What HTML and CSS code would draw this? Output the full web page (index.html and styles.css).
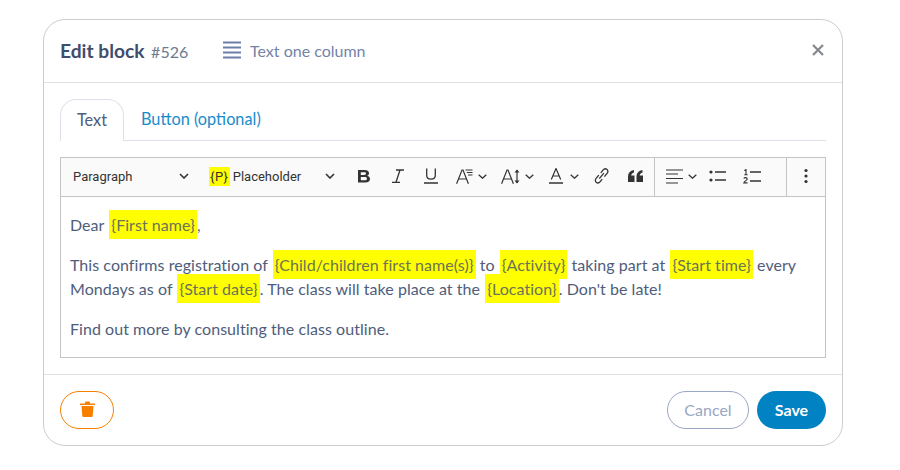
FILE: index.html
```html
<!DOCTYPE html>
<html lang="en">
<head>
<meta charset="utf-8">
<title>Edit block</title>
<link rel="stylesheet" href="styles.css">
</head>
<body>
<div class="card">
  <header class="head">
    <h1 class="title">Edit block <span class="num">#526</span></h1>
    <div class="kind">
      <svg class="kind-icon" width="18" height="18" viewBox="0 0 18 18"><path d="M0 1.500h18M0 6.500h18M0 11.500h18M0 16.500h18" stroke="#6d7fa8" stroke-width="2" fill="none"/></svg>
      <span>Text one column</span>
    </div>
    <svg class="close" width="12" height="12" viewBox="0 0 12 12"><path d="M1 1l10 10M11 1L1 11" stroke="#85888c" stroke-width="2.200" fill="none"/></svg>
  </header>
  <main class="body">
    <nav class="tabs">
      <span class="tab active">Text</span>
      <span class="tab link">Button (optional)</span>
    </nav>
    <section class="editor">
      <div class="toolbar">
        <div class="tgroup first">
          <span class="drop para">Paragraph<svg class="chev-lg" width="10" height="6" viewBox="0 0 10 6"><path d="M1 1l4 4 4-4" stroke="#333" stroke-width="1.600" fill="none"/></svg></span>
          <span class="drop ph"><span class="ph-p"><mark class="ph-mark">{P}</mark> Placeholder</span><svg class="chev-lg" width="10" height="6" viewBox="0 0 10 6"><path d="M1 1l4 4 4-4" stroke="#333" stroke-width="1.600" fill="none"/></svg></span>
          <svg class="ic bold" width="14" height="14" viewBox="0 0 14 14"><path d="M1 1h6.600C10.200 1 12 2.200 12 4.200c0 1.300-.8 2.200-1.900 2.600C11.700 7.200 13 8.300 13 10c0 2.200-1.800 3.500-4.600 3.500H1zM3.800 3.200v2.800h3.500c1 0 1.700-.5 1.700-1.400s-.7-1.400-1.700-1.400zM3.800 8.100v3.200h4.200c1.200 0 1.900-.6 1.900-1.600S9.200 8.100 8 8.100z" fill="#333" fill-rule="evenodd"/></svg>
          <svg class="ic ital" width="12" height="14" viewBox="0 0 12 14"><path d="M4 1h8M0 13.300h8M8 1L4 13.300" stroke="#333" stroke-width="1.300" fill="none"/></svg>
          <svg class="ic und" width="14" height="16" viewBox="0 0 14 16"><path d="M2.700 .5v6.800c0 2.700 1.700 3.900 4.300 3.900s4.300-1.200 4.300-3.900V.5M0 15h14" stroke="#333" stroke-width="1.300" fill="none"/></svg>
          <svg class="ic fam" width="17" height="15" viewBox="0 0 17 15"><path d="M.6 14.700L6 1h1L12.400 14.700M2.700 10h8M9.500 1h7M10.800 3.500h5.700M12 6h4.500" stroke="#333" stroke-width="1.200" fill="none"/></svg>
          <svg class="chev c1" width="9" height="5" viewBox="0 0 9 5"><path d="M.7.7l3.800 3.500L8.300.7" stroke="#333" stroke-width="1.300" fill="none"/></svg>
          <svg class="ic size" width="20" height="15" viewBox="0 0 20 15"><path d="M.6 14.700L6 1h1L12.400 14.700M2.700 10h8M16 1v13" stroke="#333" stroke-width="1.200" fill="none"/><path d="M13.500 3.500L16 .5l2.500 3zM13.500 11.500L16 14.500l2.500-3z" fill="#333"/></svg>
          <svg class="chev c2" width="9" height="5" viewBox="0 0 9 5"><path d="M.7.7l3.800 3.500L8.300.7" stroke="#333" stroke-width="1.300" fill="none"/></svg>
          <svg class="ic col" width="14" height="16" viewBox="0 0 14 16"><path d="M2.300 11.500L7 .5l4.700 11M3.800 8h6.400" stroke="#333" stroke-width="1.200" fill="none"/><path d="M0 15h14" stroke="#333" stroke-width="1.500"/></svg>
          <svg class="chev c3" width="9" height="5" viewBox="0 0 9 5"><path d="M.7.7l3.800 3.500L8.300.7" stroke="#333" stroke-width="1.300" fill="none"/></svg>
          <svg class="ic lnk" width="15" height="16" viewBox="0 0 15 16"><path d="M6.800 4.800l2.200-2.700c1.100-1.300 2.900-1.500 4-.6 1.100.9 1.200 2.600.1 3.900l-2.700 3.300M8.200 11.200l-2 2.500c-1.100 1.300-2.900 1.500-4 .6-1.100-.9-1.200-2.600-.1-3.900L4.800 7.100M5.300 10.600l4.600-5.500" stroke="#333" stroke-width="1.300" fill="none"/></svg>
          <svg class="ic quote" width="15" height="12" viewBox="0 0 15 12"><path d="M0 12V6.500C0 3 2 .7 6 0v2.500C4.200 3 3.400 4 3.200 5.500H6.500V12zM8.500 12V6.500C8.500 3 10.500 .7 14.500 0v2.500c-1.800.5-2.600 1.500-2.800 3H15V12z" fill="#333"/></svg>
        </div>
        <div class="tgroup second">
          <svg class="ic" width="17" height="15" viewBox="0 0 17 15"><path d="M0 1h17M0 5h12M0 9.500h17M0 14h12" stroke="#333" stroke-width="1.200" fill="none"/></svg>
          <svg class="chev c4" width="9" height="5" viewBox="0 0 9 5"><path d="M.7.7l3.800 3.500L8.300.7" stroke="#333" stroke-width="1.300" fill="none"/></svg>
          <svg class="ic bul" width="17" height="12" viewBox="0 0 17 12"><circle cx="2" cy="2" r="1.600" fill="#333"/><circle cx="2" cy="10" r="1.600" fill="#333"/><path d="M6 2h11M6 10h11" stroke="#333" stroke-width="1.300"/></svg>
          <svg class="ic numl" width="18" height="15" viewBox="0 0 18 15"><path d="M1.300 1.500L3 .7v5M1.300 5.700h3.300M.8 9.500c.5-1.200 3.400-1.200 3.400.4 0 1.400-2.600 2-3.400 4h3.800" stroke="#333" stroke-width="1.100" fill="none"/><path d="M7 3h11M7 12h11" stroke="#333" stroke-width="1.300"/></svg>
        </div>
        <div class="tgroup third">
          <svg width="4" height="16" viewBox="0 0 4 16"><circle cx="2" cy="2.500" r="1.600" fill="#333"/><circle cx="2" cy="8" r="1.600" fill="#333"/><circle cx="2" cy="13.500" r="1.600" fill="#333"/></svg>
        </div>
      </div>
      <div class="content">
        <p>Dear <mark class="hl">{First name}</mark>,</p>
        <p>This confirms registration of <mark class="hl">{Child/children first name(s)}</mark> to <mark class="hl">{Activity}</mark> taking part at <mark class="hl">{Start time}</mark> every Mondays as of <mark class="hl">{Start date}</mark>. The class will take place at the <mark class="hl">{Location}</mark>. Don't be late!</p>
        <p>Find out more by consulting the class outline.</p>
      </div>
    </section>
  </main>
  <footer class="foot">
    <button class="btn del" type="button" aria-label="Delete">
      <svg width="15" height="16" viewBox="0 0 15 16"><path d="M0 2.500h15v1.500H0zM5 2.500V1.500C5 1 5.400.6 6 .6h3c.6 0 1 .4 1 .9v1z" fill="#f77f00"/><path d="M1.500 5h12l-.8 10c0 .6-.5 1-1.100 1H3.400c-.6 0-1.100-.4-1.100-1z" fill="#f77f00"/></svg>
    </button>
    <div class="actions">
      <button class="btn cancel" type="button">Cancel</button>
      <button class="btn save" type="button">Save</button>
    </div>
  </footer>
</div>
</body>
</html>
```

FILE: styles.css
```css
* { box-sizing: border-box; }
html, body { margin: 0; background: #fff; }
body {
  padding: 19px 0 0 43px;
  font-family: "Lato", "Open Sans", sans-serif;
  color: #4f5d7c;
}
.card {
  width: 800px;
  height: 427px;
  border: 1px solid #ccc;
  border-radius: 22px;
  display: flex;
  flex-direction: column;
}
.head {
  height: 63px;
  flex: none;
  display: flex;
  align-items: center;
  padding: 0 16px 2px 16px;
  border-bottom: 1px solid #dfe1e6;
}
.title {
  margin: 0;
  font-size: 19.200px;
  font-weight: 700;
  color: #3f4e6d;
  width: 163px;
  white-space: nowrap;
}
.num { font-size: 16px; font-weight: 400; color: #6d7a90; margin-left: 2px; }
.kind {
  display: flex;
  align-items: center;
  gap: 9px;
  font-size: 16px;
  color: #7384a8;
}
.close { margin-left: auto; margin-right: 2px; }
.body { flex: 1; padding: 16px 16px 0; }
.tabs {
  display: flex;
  height: 42px;
  border-bottom: 1px solid #dfe1ea;
  font-size: 16.300px;
}
.tab { display: flex; align-items: center; height: 39px; }
.active {
  width: 64px;
  justify-content: center;
  color: #4f5d7c;
  border: 1px solid #dfe1ea;
  border-bottom: 0;
  border-radius: 16px 16px 0 0;
  height: 42px;
  padding-bottom: 3px;
  background: #fff;
}
.link { color: #1a8ccb; margin-left: 17px; }
.editor { margin-top: 16px; border: 1px solid #c4c4c4; }
.toolbar {
  height: 39px;
  display: flex;
  background: #fafafa;
  border-bottom: 1px solid #c4c4c4;
  font-family: "Roboto", sans-serif;
  font-size: 13px;
  color: #333;
}
.tgroup { display: flex; align-items: center; padding-bottom: 2px; }
.first { width: 593px; padding-left: 12px; }
.second { width: 133px; padding-left: 11px; border-left: 1px solid #c4c4c4; border-right: 1px solid #c4c4c4; }
.third { flex: 1; justify-content: center; }
.drop { display: flex; align-items: center; justify-content: space-between; }
.para { width: 116px; }
.ph { width: 126px; margin-left: 20px; }
.ph-p { white-space: nowrap; }
.ph-mark { background: #ff0; color: #333; padding: 2px 1px; letter-spacing: .5px; }
.ic { flex: none; }
.bold { margin-left: 22px; }
.ital { margin-left: 21px; }
.und { margin-left: 20px; }
.fam { margin-left: 18px; }
.chev { flex: none; }
.c1 { margin-left: 5px; }
.size { margin-left: 14px; }
.c2 { margin-left: 4px; }
.col { margin-left: 15px; }
.c3 { margin-left: 7px; }
.lnk { margin-left: 15px; }
.quote { margin-left: 19px; }
.c4 { margin-left: 5px; }
.bul { margin-left: 12px; }
.numl { margin-left: 17px; }
.content {
  height: 160px;
  padding: 16px 9px 0;
  font-size: 16px;
  letter-spacing: .05px;
  line-height: 24px;
  color: #4f5d7c;
}
.content p { margin: 0 0 16px; }
.hl {
  background: #ff0;
  color: #6b7358;
  padding: 5px 2px;
  margin: 0 0 0 1px;
}
.foot {
  margin-top: 16px;
  flex: none;
  height: 71px;
  border-top: 1px solid #dfe1e6;
  display: flex;
  align-items: center;
  justify-content: space-between;
  padding: 0 16px;
}
.actions { display: flex; gap: 8px; }
.btn {
  height: 38px;
  border-radius: 19px;
  font-family: inherit;
  font-size: 16px;
  padding: 0 0 1px;
  display: flex;
  align-items: center;
  justify-content: center;
  background: #fff;
}
.del { width: 54px; border: 1px solid #f77f00; padding-bottom: 2px; }
.cancel { width: 82px; border: 1px solid #9aa7c4; color: #9aa7c4; }
.save { width: 69px; border: 0; background: #0082c3; color: #fff; font-weight: 700; }
```
